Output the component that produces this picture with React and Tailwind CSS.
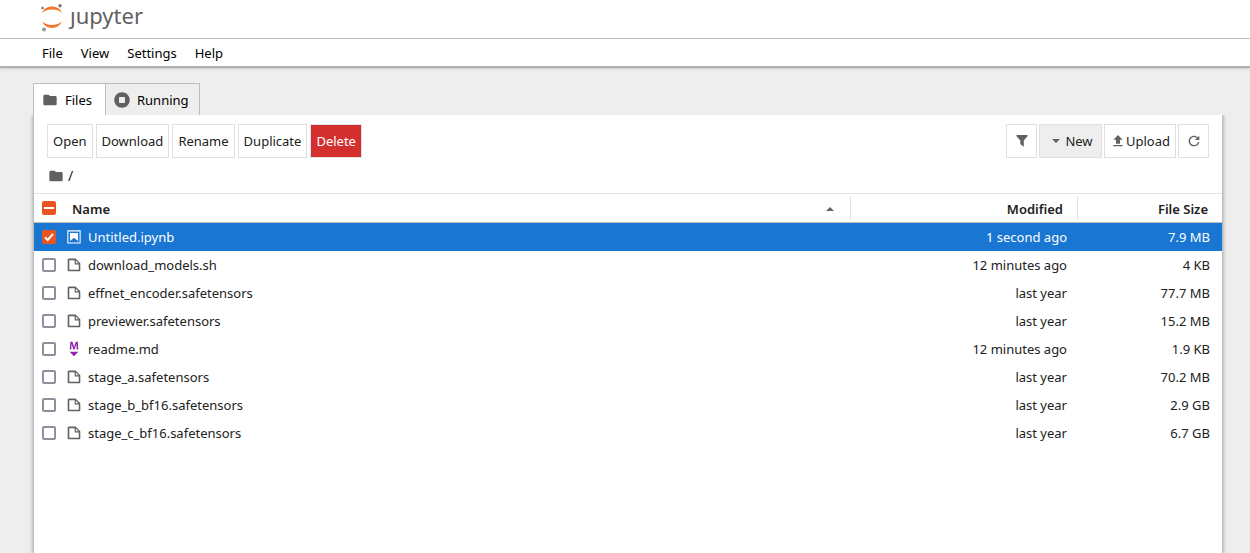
import { useState } from "react";

const initialFiles = [
  { name: "Untitled.ipynb", type: "notebook", modified: "1 second ago", size: "7.9 MB" },
  { name: "download_models.sh", type: "file", modified: "12 minutes ago", size: "4 KB" },
  { name: "effnet_encoder.safetensors", type: "file", modified: "last year", size: "77.7 MB" },
  { name: "previewer.safetensors", type: "file", modified: "last year", size: "15.2 MB" },
  { name: "readme.md", type: "markdown", modified: "12 minutes ago", size: "1.9 KB" },
  { name: "stage_a.safetensors", type: "file", modified: "last year", size: "70.2 MB" },
  { name: "stage_b_bf16.safetensors", type: "file", modified: "last year", size: "2.9 GB" },
  { name: "stage_c_bf16.safetensors", type: "file", modified: "last year", size: "6.7 GB" },
];

const button =
  "flex h-[34px] items-center justify-center border border-[#e0e0e0] bg-white px-[5px]";

function Logo() {
  return (
    <a href="/tree" className="flex h-8 items-center text-[#616161]">
      <svg width="24" height="32" viewBox="0 0 24 32" aria-hidden="true">
        <path d="M2 13C4 8.700 7.500 6.600 12 6.600S20 8.700 22 13C19.500 10.600 16 9.500 12 9.500S4.500 10.600 2 13Z" fill="#f37726" />
        <path d="M2 21.200C4 25.700 7.500 27.900 12 27.900S20 25.700 22 21.200C19.500 23.700 16 24.900 12 24.900S4.500 23.700 2 21.200Z" fill="#f37726" />
        <circle cx="20" cy="5.800" r="1.700" fill="#767677" />
        <circle cx="2.600" cy="8" r="1.200" fill="#767677" />
        <circle cx="4" cy="29.500" r="2" fill="#989798" />
      </svg>
      <span className="ml-[6px] pb-[2px] text-[22px] leading-[30px]">ȷupyter</span>
    </a>
  );
}

function FolderIcon() {
  return (
    <svg width="16" height="16" viewBox="0 0 24 24" fill="#616161" aria-hidden="true">
      <path d="M10 4H4c-1.100 0-1.990.900-1.990 2L2 18c0 1.100.900 2 2 2h16c1.100 0 2-.900 2-2V8c0-1.100-.900-2-2-2h-8l-2-2z" />
    </svg>
  );
}

function RunningIcon() {
  return (
    <svg width="16" height="16" viewBox="0 0 512 512" fill="#616161" aria-hidden="true">
      <path d="M256 8C119 8 8 119 8 256s111 248 248 248 248-111 248-248S393 8 256 8zm96 328c0 8.800-7.200 16-16 16H176c-8.800 0-16-7.200-16-16V176c0-8.800 7.200-16 16-16h160c8.800 0 16 7.200 16 16v160z" />
    </svg>
  );
}

function FilterIcon() {
  return (
    <svg width="16" height="16" viewBox="0 0 16 16" fill="#616161" aria-hidden="true">
      <path d="M2.500 2h11v1.200L9.800 7.500v6.300L6.300 11V7.500L2.500 3.200z" />
    </svg>
  );
}

function CaretIcon({ up }) {
  return (
    <svg width="8" height="4" viewBox="0 0 8 4" fill="#616161" aria-hidden="true">
      <path d={up ? "M0 4L4 0L8 4Z" : "M0 0L4 4L8 0Z"} />
    </svg>
  );
}

function UploadIcon() {
  return (
    <svg width="16" height="16" viewBox="0 0 24 24" fill="#616161" aria-hidden="true">
      <path d="M9 16h6v-6h4l-7-7-7 7h4zm-4 2h14v2H5z" />
    </svg>
  );
}

function RefreshIcon() {
  return (
    <svg width="16" height="16" viewBox="0 0 18 18" fill="#616161" aria-hidden="true">
      <path d="M9 13.500c-2.490 0-4.500-2.010-4.500-4.500S6.510 4.500 9 4.500c1.240 0 2.360.520 3.170 1.330L10 8h5V3l-1.760 1.760C12.150 3.680 10.660 3 9 3 5.690 3 3.010 5.690 3.010 9S5.690 15 9 15c2.970 0 5.430-2.160 5.900-5h-1.520c-.460 2-2.240 3.500-4.380 3.500z" />
    </svg>
  );
}

function FileTypeIcon({ type, selected }) {
  if (type === "notebook") {
    return (
      <svg width="16" height="16" viewBox="0 0 22 22" fill={selected ? "#fff" : "#ef6c00"} aria-hidden="true">
        <path d="M18.700 3.300v15.400H3.300V3.300h15.400m1.500-1.500H1.800v18.300h18.300l.100-18.300z" />
        <path d="M16.500 16.500l-5.400-4.300-5.600 4.300v-11h11z" />
      </svg>
    );
  }
  if (type === "markdown") {
    return (
      <svg width="16" height="16" viewBox="0 0 22 22" fill="#8e24aa" aria-hidden="true">
        <path d="M5 14.900h12l-6.100 6zM14.400 5.900c0-.700 0-1.500.100-2.300h-.100c-.200.700-.400 1.500-.600 2.200l-2 5.900h-1.700L8.300 5.800c-.200-.700-.400-1.500-.500-2.200H7.700c0 .700-.100 1.600-.100 2.300l-.400 5.900H5.200L6 1.100h2.900l1.700 5c.200.600.300 1.300.500 2h.100c.200-.700.300-1.400.500-2l1.700-5h2.800l.700 10.700h-2.200z" />
      </svg>
    );
  }
  return (
    <svg width="16" height="16" viewBox="0 0 22 22" fill="#616161" aria-hidden="true">
      <path d="M19.300 8.200l-5.500-5.500c-.300-.300-.700-.500-1.200-.500H3.900c-.800.100-1.600.900-1.600 1.800v14.100c0 .900.700 1.600 1.600 1.600h14.200c.900 0 1.600-.700 1.600-1.600V9.400c.100-.500-.100-.900-.400-1.200zm-5.800-3.300l3.400 3.600h-3.400V4.900zm3.900 12.700H4.700c-.100 0-.200 0-.200-.200V4.700c0-.200.100-.300.200-.300h7.200v4.400s0 .800.300 1.100c.300.300 1.100.300 1.100.300h4.300v7.200s-.100.200-.200.200z" />
    </svg>
  );
}

function Checkbox({ label, checked, mixed, onChange }) {
  return (
    <span className="grid size-[14px] place-items-center">
      <input
        type="checkbox"
        aria-label={label}
        checked={checked}
        onChange={onChange}
        className={`col-start-1 row-start-1 size-[14px] appearance-none rounded-[2px] ${
          checked || mixed ? "bg-[#e95420]" : "border-2 border-[#8f8f9d] bg-white"
        }`}
      />
      {(checked || mixed) && (
        <svg
          className="pointer-events-none col-start-1 row-start-1"
          width="14"
          height="14"
          viewBox="0 0 14 14"
          fill="none"
          stroke="#fff"
          strokeWidth="2"
          aria-hidden="true"
        >
          <path d={mixed ? "M2 7H12" : "M3 7.300L5.700 10L11 4"} />
        </svg>
      )}
    </span>
  );
}

function App() {
  const [selected, setSelected] = useState(["Untitled.ipynb"]);
  const allSelected = selected.length === initialFiles.length;

  const toggle = (name) =>
    setSelected((prev) =>
      prev.includes(name) ? prev.filter((n) => n !== name) : [...prev, name]
    );

  return (
    <div className="flex h-screen flex-col overflow-hidden bg-[#eee] font-['Noto_Sans',sans-serif] text-[13px] leading-4 text-[#212121]">
      <header className="z-10 border-b-2 border-[#b0b0b0] bg-white shadow">
        <div className="h-[39px] border-b border-[#bdbdbd] pl-10">
          <Logo />
        </div>
        <nav className="flex h-[27px] items-center gap-[2px] pl-[34px] text-black">
          <button className="px-2">File</button>
          <button className="px-2">View</button>
          <button className="px-2">Settings</button>
          <button className="px-2">Help</button>
        </nav>
      </header>

      <main className="mr-7 ml-[33px] flex flex-1 flex-col pt-[15px]">
        <div role="tablist" className="flex h-8 text-black">
          <button
            role="tab"
            aria-selected="true"
            className="flex w-[73px] items-center gap-[7px] border border-b-0 border-[#bdbdbd] bg-white pl-2"
          >
            <FolderIcon />
            Files
          </button>
          <button
            role="tab"
            aria-selected="false"
            className="flex w-[94px] items-center gap-[7px] border border-b-0 border-l-0 border-[#bdbdbd] bg-[#eee] pl-2"
          >
            <RunningIcon />
            Running
          </button>
        </div>

        <section className="ml-px flex-1 bg-white shadow-[0_0_4px_1px_rgba(0,0,0,0.35)] [clip-path:inset(0_-8px_0_-8px)]">
          <div className="flex justify-between pt-[9px] pr-[13px] pl-[13px]">
            <div className="flex gap-[3px]">
              <button className={button}>Open</button>
              <button className={button}>Download</button>
              <button className={button}>Rename</button>
              <button className={button}>Duplicate</button>
              <button className="flex h-[34px] items-center border border-[#e0e0e0] bg-[#d32f2f] px-[5px] text-white">
                Delete
              </button>
            </div>
            <div className="flex gap-[2px]">
              <button aria-label="Filter" className={`${button} w-[31px]`}>
                <FilterIcon />
              </button>
              <button className="flex h-[34px] w-[63px] items-center justify-center gap-[5px] border border-[#e0e0e0] bg-[#eee] pl-1">
                <CaretIcon />
                New
              </button>
              <button className={`${button} w-[72px]`}>
                <UploadIcon />
                Upload
              </button>
              <button aria-label="Refresh" className={`${button} w-[31px]`}>
                <RefreshIcon />
              </button>
            </div>
          </div>

          <div className="flex h-[35px] items-center gap-1 pl-[14px]">
            <FolderIcon />
            <a href="/tree" className="text-sm">/</a>
          </div>

          <table className="w-full table-fixed border-t border-[#e0e0e0]">
            <colgroup>
              <col className="w-8" />
              <col />
              <col className="w-[227px]" />
              <col className="w-[145px]" />
            </colgroup>
            <thead>
              <tr className="h-[29px] border-b border-[#bdbdbd]">
                <th className="pl-2">
                  <Checkbox
                    label="Select all files and directories"
                    checked={allSelected}
                    mixed={selected.length > 0 && !allSelected}
                    onChange={() =>
                      setSelected(allSelected ? [] : initialFiles.map((f) => f.name))
                    }
                  />
                </th>
                <th className="pr-4 pl-[6px] text-left font-semibold">
                  <div className="flex items-center justify-between pt-px">
                    Name
                    <CaretIcon up />
                  </div>
                </th>
                <th className="text-right font-semibold">
                  <div className="h-6 border-l border-[#e0e0e0] pr-[14px] leading-[26px]">Modified</div>
                </th>
                <th className="text-right font-semibold">
                  <div className="h-6 border-l border-[#e0e0e0] pr-[14px] leading-[26px]">File Size</div>
                </th>
              </tr>
            </thead>
            <tbody>
              {initialFiles.map((file) => {
                const isSelected = selected.includes(file.name);
                return (
                  <tr key={file.name} className={`h-7 ${isSelected ? "bg-[#1976d2] text-white" : ""}`}>
                    <td className="pl-2">
                      <Checkbox
                        label={`Select ${file.name}`}
                        checked={isSelected}
                        onChange={() => toggle(file.name)}
                      />
                    </td>
                    <td>
                      <div className="flex items-center gap-[6px]">
                        <FileTypeIcon type={file.type} selected={isSelected} />
                        {file.name}
                      </div>
                    </td>
                    <td className="pr-[10px] text-right">{file.modified}</td>
                    <td className="pr-3 text-right">{file.size}</td>
                  </tr>
                );
              })}
            </tbody>
          </table>
        </section>
      </main>
    </div>
  );
}

export default App;
